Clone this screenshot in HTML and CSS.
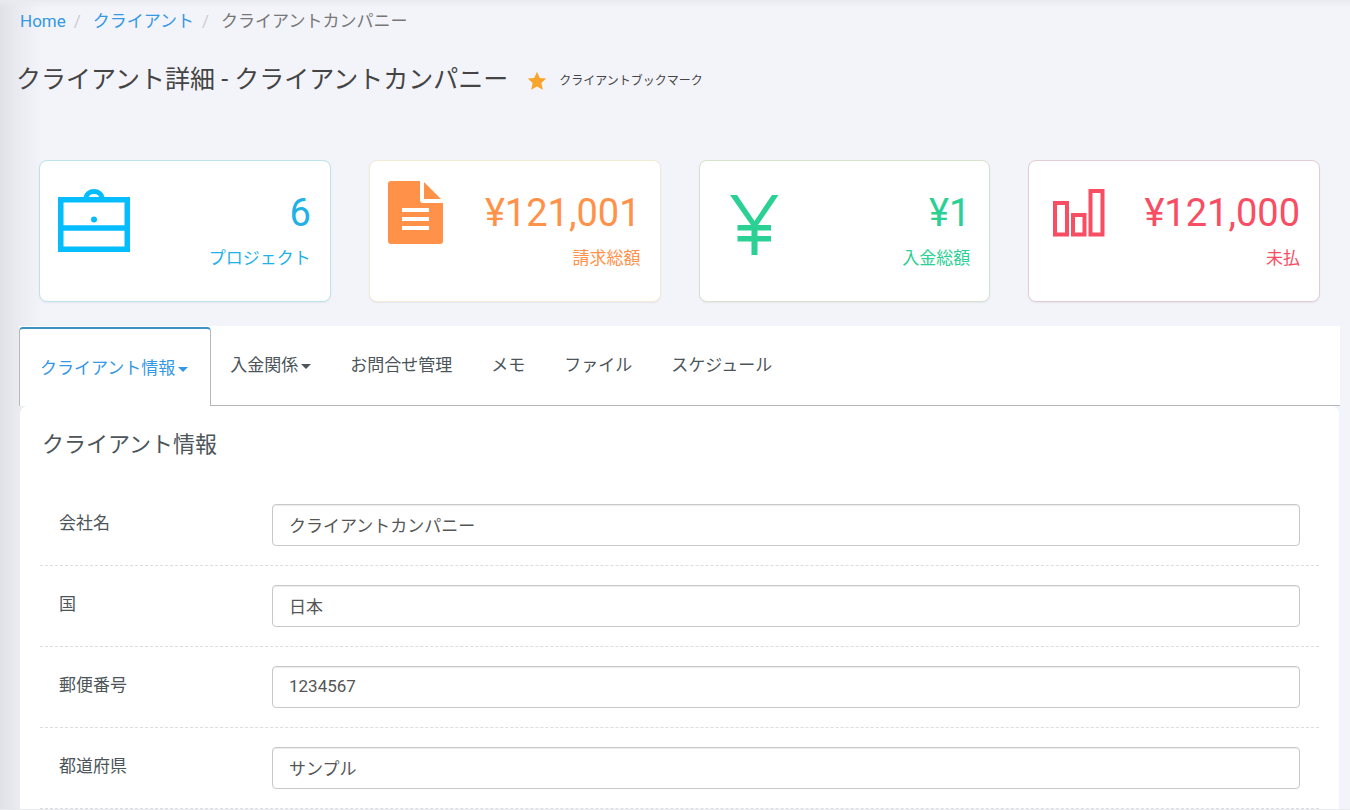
FILE: index.html
```html
<!DOCTYPE html>
<html lang="ja">
<head>
<meta charset="utf-8">
<title>クライアント詳細</title>
<link rel="stylesheet" href="styles.css">
</head>
<body>
<nav aria-label="パンくず">
  <ol class="breadcrumb">
    <li><a href="#">Home</a></li>
    <li><a href="#">クライアント</a></li>
    <li class="current">クライアントカンパニー</li>
  </ol>
</nav>
<header class="heading">
  <h1>クライアント詳細 - クライアントカンパニー</h1>
  <a class="bookmark" href="#">
    <svg width="20" height="20" viewBox="0 0 20 20"><path fill="#f8a52d" d="M10 .8l2.8 6.1 6.4.7-4.8 4.5 1.4 6.7L10 15.5l-5.8 3.3 1.4-6.7L.8 7.600l6.400-.7z"/></svg>
    <span>クライアントブックマーク</span>
  </a>
</header>
<section class="stats">
  <article class="card blue">
    <svg width="72" height="72" viewBox="0 0 72 72" fill="none" stroke="currentColor"><path stroke-width="5.500" d="M2.750 18.750h66.500v49.500H2.750zM2.750 47h66.500"/><path stroke-width="5" d="M28 18c0-10 16-10 16 0"/><circle cx="36" cy="38.500" r="3" fill="currentColor" stroke="none"/></svg>
    <div class="figures"><p class="value">6</p><p class="label">プロジェクト</p></div>
  </article>
  <article class="card orange">
    <svg width="56" height="72" viewBox="0 0 56 72"><path fill="currentColor" fill-rule="evenodd" d="M3 0h29v19q0 3 3 3h20v38q0 3-3 3H3q-3 0-3-3V3q0-3 3-3zM14 27v4h27v-4zM14 36v4h27v-4zM14 45v4h27v-4zM36 1l17 17H36z"/></svg>
    <div class="figures"><p class="value">¥121,001</p><p class="label">請求総額</p></div>
  </article>
  <article class="card green">
    <svg width="72" height="76" viewBox="0 0 72 76" fill="currentColor"><path d="M12 14h7l17.500 26L54 14h6.500L40 44h13v5.500H39.500V55H53v5.500H39.500V74h-6V60.500H19.500V55h14v-5.500h-14V44H33z"/></svg>
    <div class="figures"><p class="value">¥1</p><p class="label">入金総額</p></div>
  </article>
  <article class="card red">
    <svg width="62" height="72" viewBox="0 0 62 72" fill="none" stroke="currentColor" stroke-width="4"><path d="M8 22h12v31.500H8zM26 34h11.500v19.500H26zM43.500 10h12v43.500h-12z"/></svg>
    <div class="figures"><p class="value">¥121,000</p><p class="label">未払</p></div>
  </article>
</section>
<main>
  <nav class="tabs" aria-label="クライアントメニュー">
    <a class="active" href="#">クライアント情報<i class="caret"></i></a>
    <a href="#">入金関係<i class="caret"></i></a>
    <a href="#">お問合せ管理</a>
    <a href="#">メモ</a>
    <a href="#">ファイル</a>
    <a href="#">スケジュール</a>
  </nav>
  <section class="panel">
    <h2>クライアント情報</h2>
    <form>
      <div class="row"><label for="company">会社名</label><input id="company" type="text" value="クライアントカンパニー"></div>
      <div class="row"><label for="country">国</label><input id="country" type="text" value="日本"></div>
      <div class="row"><label for="zip">郵便番号</label><input id="zip" type="text" value="1234567"></div>
      <div class="row"><label for="pref">都道府県</label><input id="pref" type="text" value="サンプル"></div>
    </form>
  </section>
</main>
</body>
</html>
```
FILE: styles.css
```css
* { box-sizing: border-box; }
body {
  margin: 0;
  background: linear-gradient(#e9eaf0, rgba(243, 244, 250, 0) 8px), linear-gradient(90deg, #e0e1e7, #ebecf2 20px, #f3f4fa 42px);
  color: #4c5559;
  font: 17px/24px Roboto, "Noto Sans CJK JP", sans-serif;
}
h1, h2, p { margin: 0; font-weight: 400; }
a { color: #3498e5; text-decoration: none; }
.breadcrumb {
  display: flex;
  margin: 0;
  padding: 9px 20px 8px;
  list-style: none;
}
.breadcrumb li + li::before { content: "/"; padding: 0 12px 0 8px; color: #ccc; }
.breadcrumb .current { color: #777; }
.heading {
  display: flex;
  align-items: center;
  padding: 21px 16px 0;
}
h1 { color: #444; font-size: 25px; line-height: 36px; }
.bookmark {
  display: flex;
  align-items: center;
  gap: 12px;
  margin-left: 19px;
  padding-top: 2px;
  color: #444;
  font-size: 12px;
  line-height: 20px;
}
.stats {
  display: grid;
  grid-template-columns: repeat(4, 1fr);
  gap: 38px;
  padding: 62px 30px 0 39px;
}
.card {
  display: flex;
  justify-content: space-between;
  height: 142px;
  padding: 20px 19px 20px 18px;
  background: #fff;
  border: 1px solid;
  border-radius: 8px;
  box-shadow: 0 1px 2px rgba(0, 0, 0, .06);
}
.card svg { flex: none; }
.figures { padding-top: 8px; text-align: right; }
.value { font-size: 38px; line-height: 48px; }
.label { margin-top: 9px; }
.blue { border-color: #bde2ea; }
.blue svg { color: #05bcfd; }
.blue .figures { color: #20b1e8; }
.orange { border-color: #f3ead3; color: #ff9149; }
.green { border-color: #d5e2cd; color: #2bd094; }
.red { border-color: #e2ccd3; color: #f84d63; }
main { margin: 24px 10px 0 19px; }
.tabs {
  display: flex;
  height: 80px;
  padding-top: 1px;
  background: #fff;
  border-bottom: 1px solid #b5b7b9;
}
.tabs a {
  display: flex;
  align-items: center;
  padding: 0 20px 3px 19px;
  color: #4c5559;
}
.tabs .active {
  height: 79px;
  padding: 0 22px 0 20px;
  background: #fff;
  border: 1px solid #b5b7b9;
  border-top: 2px solid #3c92c2;
  border-bottom: 0;
  border-radius: 4px 4px 0 0;
  color: #3498e5;
}
.caret {
  margin: 4px 0 0 3px;
  border: 5px solid transparent;
  border-top-color: currentColor;
  border-bottom: 0;
}
.panel {
  margin: 0 1px;
  padding: 21px 20px 0;
  background: #fff;
  border-radius: 8px 8px 0 0;
}
h2 { padding: 0 2px; font-size: 22px; line-height: 36px; }
form { padding-top: 22px; }
.row {
  display: grid;
  grid-template-columns: 213px 1fr;
  padding: 19px;
  border-bottom: 1px dashed #ddd;
}
.row label { padding-top: 7px; }
.row input {
  width: 100%;
  height: 42px;
  padding: 0 16px 2px;
  background: #fff;
  border: 1px solid #c6c8ca;
  border-radius: 4px;
  box-shadow: inset 0 1px 1px rgba(0, 0, 0, .08);
  color: #555;
  font: inherit;
}
```
